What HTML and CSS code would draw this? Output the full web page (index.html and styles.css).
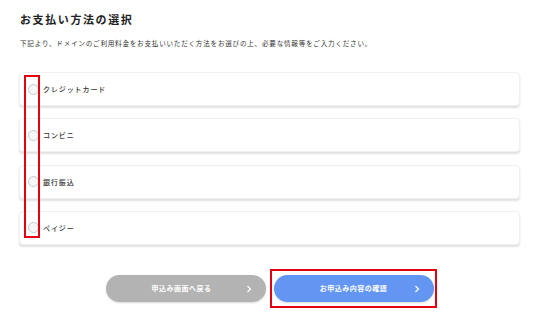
FILE: index.html
```html
<!DOCTYPE html>
<html lang="ja">
<head>
<meta charset="utf-8">
<link rel="stylesheet" href="styles.css">
</head>
<body>
<div class="page">
  <h1 class="title">お支払い方法の選択</h1>
  <p class="desc">下記より、ドメインのご利用料金をお支払いいただく方法をお選びの上、必要な情報等をご入力ください。</p>
  <div class="methods">
    <label class="card"><span class="radio"></span><span class="label">クレジットカード</span></label>
    <label class="card"><span class="radio"></span><span class="label">コンビニ</span></label>
    <label class="card"><span class="radio"></span><span class="label">銀行振込</span></label>
    <label class="card"><span class="radio"></span><span class="label">ペイジー</span></label>
    <div class="mark mark-radios"></div>
  </div>
  <div class="actions">
    <button class="btn btn-back"><span>申込み画面へ戻る</span><svg class="chev" viewBox="0 0 6 8"><path d="M1.5 1 L4.5 4 L1.5 7" fill="none" stroke="#fff" stroke-width="1.2"/></svg></button>
    <div class="confirm-wrap">
      <button class="btn btn-next"><span>お申込み内容の確認</span><svg class="chev" viewBox="0 0 6 8"><path d="M1.5 1 L4.5 4 L1.5 7" fill="none" stroke="#fff" stroke-width="1.2"/></svg></button>
      <div class="mark mark-btn"></div>
    </div>
  </div>
</div>
</body>
</html>
```
FILE: styles.css
```css
* { box-sizing: border-box; }
html, body { margin: 0; padding: 0; background: #fff; }
body {
  font-family: "Noto Sans CJK JP", "Noto Sans", sans-serif;
  color: #333;
}
.page {
  width: 550px;
  height: 319px;
  padding: 11px 30px 0 19px;
}
.title {
  margin: 0 0 0 1px;
  font-size: 11px;
  line-height: 16px;
  font-weight: 700;
  letter-spacing: 1.6px;
  color: #222;
}
.desc {
  margin: 11px 0 0 1px;
  font-size: 6.6px;
  line-height: 10px;
  letter-spacing: 0.75px;
  color: #333;
}
.methods {
  position: relative;
  margin-top: 24px;
  display: flex;
  flex-direction: column;
  gap: 12.3px;
}
.card {
  height: 34px;
  display: flex;
  align-items: center;
  padding-left: 8px;
  background: #fff;
  border: 1px solid #f0f0f0;
  border-radius: 4px;
  box-shadow: 0 2px 2px rgba(0,0,0,0.12);
}
.radio {
  width: 11px;
  height: 11px;
  border-radius: 50%;
  border: 1px solid #c8c8c8;
  background: #f7f7f7;
  margin-right: 4px;
  flex: none;
}
.label {
  font-size: 7px;
  font-weight: 500;
  letter-spacing: 0.9px;
  color: #333;
}
.mark {
  position: absolute;
  border: 2px solid #e3000f;
  pointer-events: none;
}
.mark-radios {
  left: 5px;
  top: 3px;
  width: 16px;
  height: 163px;
}
.actions {
  margin-top: 30px;
  display: flex;
  justify-content: center;
  gap: 8px;
  width: 501px;
}
.btn {
  width: 160px;
  height: 27px;
  border: none;
  border-radius: 14px;
  color: #fff;
  font-family: inherit;
  font-size: 7px;
  font-weight: 700;
  letter-spacing: 0.5px;
  position: relative;
  display: flex;
  align-items: center;
  justify-content: center;
  padding: 0;
  box-shadow: 0 1px 2px rgba(0,0,0,0.15);
}
.btn-back { background: #b3b3b3; }
.btn-back span { margin-left: -8px; }
.btn-next { background: #6396f2; }
.chev {
  position: absolute;
  right: 14px;
  top: 10px;
  width: 6px;
  height: 8px;
}
.confirm-wrap { position: relative; }
.mark-btn {
  left: -4px;
  top: -6px;
  width: 167px;
  height: 39px;
}
```
